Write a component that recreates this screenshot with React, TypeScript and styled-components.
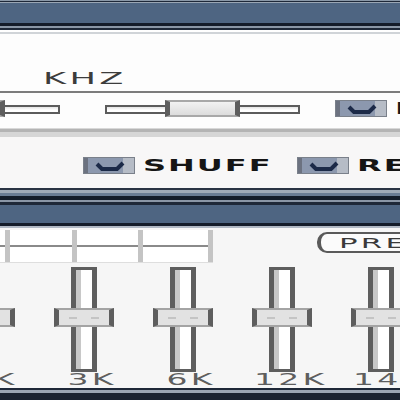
import React from 'react';
import styled, { createGlobalStyle } from 'styled-components';

const GlobalStyle = createGlobalStyle`
    html, body {
        margin: 0;
        padding: 0;
        background: #ffffff;
        overflow: hidden;
    }
`;

const Page = styled.div`
    width: 400px;
    height: 400px;
    overflow: hidden;
    display: flex;
    flex-direction: column;
    font-family: 'DejaVu Sans', 'Liberation Sans', sans-serif;
`;

const TitleBar = styled.div`
    flex: none;
    height: 34px;
    background: linear-gradient(to bottom,
        #8a98a8 0px, #8a98a8 1px,
        #1e2838 1px, #1e2838 2px,
        #9aa6b4 2px, #9aa6b4 3px,
        #4e6582 3px, #4e6582 23px,
        #141c2a 23px, #141c2a 26px,
        #8a96a6 26px, #8a96a6 28px,
        #1e2838 28px, #1e2838 30px,
        #ffffff 30px, #ffffff 32px,
        #d0d4d8 32px, #d0d4d8 34px);
`;

const MidFrame = styled.div`
    flex: none;
    height: 40px;
    background: linear-gradient(to bottom,
        #2a3444 0px, #2a3444 2px,
        #a0aab8 2px, #a0aab8 5px,
        #6a7c94 5px, #6a7c94 8px,
        #141c2a 8px, #141c2a 12px,
        #8a96a6 12px, #8a96a6 14px,
        #1e2838 14px, #1e2838 17px,
        #4e6582 17px, #4e6582 35px,
        #141c2a 35px, #141c2a 38px,
        #b0b8c4 38px, #b0b8c4 40px);
`;

const BottomFrame = styled.div`
    flex: none;
    height: 12px;
    background: linear-gradient(to bottom,
        #1e2838 0px, #1e2838 2px,
        #9aa4b2 2px, #9aa4b2 5px,
        #1a2230 5px, #1a2230 12px);
`;

const Body = styled.div<{ tint?: string, h?: number }>`
    flex: none;
    height: ${props => props.h ? props.h + 'px' : 'auto'};
    background: ${props => props.tint ? props.tint : '#fdfdfd'};
`;

// pixel-font look: wide letters, scaled horizontally
const TextBox = styled.div<{ w: number, center?: boolean }>`
    flex: none;
    width: ${props => props.w}px;
    height: 12px;
    display: flex;
    justify-content: ${props => props.center ? 'center' : 'flex-start'};
    overflow: visible;
`;

const WideText = styled.span<{ color?: string, size?: number, center?: boolean, thin?: boolean }>`
    display: inline-block;
    font-weight: ${props => props.thin ? 400 : 700};
    font-size: ${props => props.size ? props.size : 16}px;
    line-height: 12px;
    letter-spacing: ${props => props.thin ? 1.5 : 1}px;
    color: ${props => props.color ? props.color : '#444'};
    transform: scaleX(${props => props.thin ? 2.2 : 2});
    transform-origin: ${props => props.center ? 'center' : 'left'} center;
    white-space: nowrap;
`;

const KhzRow = styled.div`
    height: 57px;
    display: flex;
    align-items: flex-end;
    padding: 0 0 6px 43px;
    box-sizing: border-box;
`;

const Rule = styled.div`
    height: 2px;
    background: #7c7c7c;
`;

const SliderRow = styled.div`
    height: 35px;
    padding-top: 7px;
    box-sizing: border-box;
    display: flex;
    align-items: flex-start;
    gap: 45px;
    margin-left: -135px;
    white-space: nowrap;
`;

const HSlider = styled.div`
    position: relative;
    flex: none;
    width: 195px;
    height: 17px;
`;

const HTrack = styled.div`
    position: absolute;
    left: 0;
    right: 0;
    top: 5px;
    height: 9px;
    box-sizing: border-box;
    border: 2px solid #5c5c5c;
    background: linear-gradient(to bottom, #e4e4e4 0px, #ffffff 3px);
`;

const HThumb = styled.div<{ left: number }>`
    position: absolute;
    left: ${props => props.left}px;
    top: 0;
    width: 75px;
    height: 17px;
    box-sizing: border-box;
    border-left: 5px solid #5e5e5e;
    border-right: 5px solid #5e5e5e;
    border-top: 2px solid #a8a8a8;
    border-bottom: 2px solid #a8a8a8;
    background: linear-gradient(to bottom, #f2f2f2, #dcdcdc);
`;

const Divider = styled.div`
    height: 9px;
    background: linear-gradient(to bottom, #d8d8d8 0px, #d8d8d8 1px, #b4b4b4 1px, #b4b4b4 4px, #d6d6d6 4px);
`;

const ToggleRow = styled.div`
    height: 51px;
    box-sizing: border-box;
    padding: 20px 0 0 83px;
    display: flex;
    align-items: flex-start;
    white-space: nowrap;
`;

const Toggle = styled.div<{ gapBefore?: number, gapAfter?: number }>`
    flex: none;
    display: flex;
    align-items: center;
    gap: 8px;
    margin-left: ${props => props.gapBefore ? -45 + props.gapBefore : 0}px;
    margin-right: ${props => props.gapAfter ? props.gapAfter : 0}px;
`;

const CheckBox = styled.div`
    flex: none;
    width: 52px;
    height: 17px;
    box-sizing: border-box;
    border: 1px solid #7a808a;
    background: linear-gradient(to right, #6c7280 0px, #6c7280 4px, #8c98ae 4px, #8c98ae 78%, #b6bcc6 78%);
    display: flex;
    align-items: center;
    justify-content: center;
`;

const EqTop = styled.div`
    height: 34px;
    display: flex;
    align-items: flex-start;
    white-space: nowrap;
`;

const EqGrid = styled.div`
    flex: none;
    margin-top: 2px;
    height: 32px;
    padding-left: 5px;
    display: flex;
    background: linear-gradient(to bottom, #ffffff 0px, #ffffff 15px, #8a8a8a 15px, #8a8a8a 17px, #ffffff 17px);
    border-bottom: 1px solid #dedede;
`;

const EqCell = styled.div<{ w: number, last?: boolean }>`
    flex: none;
    width: ${props => props.w}px;
    border-left: 5px solid #c4c4c4;
    border-right: ${props => props.last ? '5px solid #c4c4c4' : 'none'};
`;

const PresetButton = styled.div`
    flex: none;
    margin: 4px 0 0 104px;
    height: 21px;
    width: 110px;
    box-sizing: border-box;
    border: 2px solid #5a5a5a;
    border-left-width: 4px;
    border-radius: 10px;
    background: #fbfbfb;
    display: flex;
    align-items: center;
    padding-left: 18px;
`;

const BandRow = styled.div`
    display: flex;
    margin: 5px 0 0 -65px;
`;

const Band = styled.div`
    flex: none;
    width: 99px;
    display: flex;
    flex-direction: column;
    align-items: center;
`;

const VTrack = styled.div`
    position: relative;
    width: 26px;
    height: 105px;
    box-sizing: border-box;
    border: 5px solid #5e5e5e;
    border-top-width: 3px;
    border-bottom-width: 3px;
    background: linear-gradient(to right, #c8c8c8 0px, #c8c8c8 5px, #ffffff 5px);
`;

const VThumb = styled.div`
    position: absolute;
    left: -22px;
    top: 38px;
    width: 60px;
    height: 19px;
    box-sizing: border-box;
    border-left: 5px solid #5e5e5e;
    border-right: 5px solid #5e5e5e;
    border-top: 2px solid #a4a4a4;
    border-bottom: 2px solid #a4a4a4;
    background: #e2e2e2;
    display: flex;
    align-items: center;
    justify-content: center;
    gap: 14px;
`;

const Grip = styled.div`
    width: 8px;
    height: 2px;
    background: #c4c4c4;
`;

const BandLabel = styled.div`
    margin-top: 2px;
    padding-left: 18px;
    width: 99px;
    box-sizing: border-box;
    display: flex;
    justify-content: center;
`;

const CheckMark = () => (
    <svg width="40" height="13" viewBox="0 0 40 13">
        <polyline points="8,5 13,10 28,10 34,4" fill="none" stroke="#1c2a48" strokeWidth="4" />
    </svg>
);

const bands = ['1K', '3K', '6K', '12K', '14K'];

class App extends React.Component {
    render() {
        return (
            <Page>
                <GlobalStyle />
                <TitleBar />
                <Body>
                    <KhzRow>
                        <TextBox w={80}><WideText thin color="#3c3c3c">KHZ</WideText></TextBox>
                    </KhzRow>
                    <Rule />
                    <SliderRow>
                        <HSlider>
                            <HTrack />
                            <HThumb left={65} />
                        </HSlider>
                        <HSlider>
                            <HTrack />
                            <HThumb left={60} />
                        </HSlider>
                        <Toggle gapBefore={35}>
                            <CheckBox><CheckMark /></CheckBox>
                            <TextBox w={40}><WideText color="#1a1a1a">EQ</WideText></TextBox>
                        </Toggle>
                    </SliderRow>
                    <Divider />
                </Body>
                <Body tint="#f8f7f7">
                    <ToggleRow>
                        <Toggle gapAfter={24}>
                            <CheckBox><CheckMark /></CheckBox>
                            <TextBox w={130}><WideText color="#151515">SHUFF</WideText></TextBox>
                        </Toggle>
                        <Toggle>
                            <CheckBox><CheckMark /></CheckBox>
                            <TextBox w={150}><WideText color="#151515">REPEAT</WideText></TextBox>
                        </Toggle>
                    </ToggleRow>
                </Body>
                <MidFrame />
                <Body tint="#f6f6f6" h={160}>
                    <EqTop>
                        <EqGrid>
                            <EqCell w={62} />
                            <EqCell w={61} />
                            <EqCell w={65} last />
                        </EqGrid>
                        <PresetButton>
                            <TextBox w={120}><WideText thin size={14} color="#3a3a3a">PRESETS</WideText></TextBox>
                        </PresetButton>
                    </EqTop>
                    <BandRow>
                        {bands.map(b => (
                            <Band key={b}>
                                <VTrack>
                                    <VThumb><Grip /><Grip /></VThumb>
                                </VTrack>
                                <BandLabel>
                                    <TextBox w={b.length * 24} center>
                                        <WideText thin color="#5e5e5e" size={15} center>{b}</WideText>
                                    </TextBox>
                                </BandLabel>
                            </Band>
                        ))}
                    </BandRow>
                </Body>
                <BottomFrame />
            </Page>
        );
    }
}

export default App;
